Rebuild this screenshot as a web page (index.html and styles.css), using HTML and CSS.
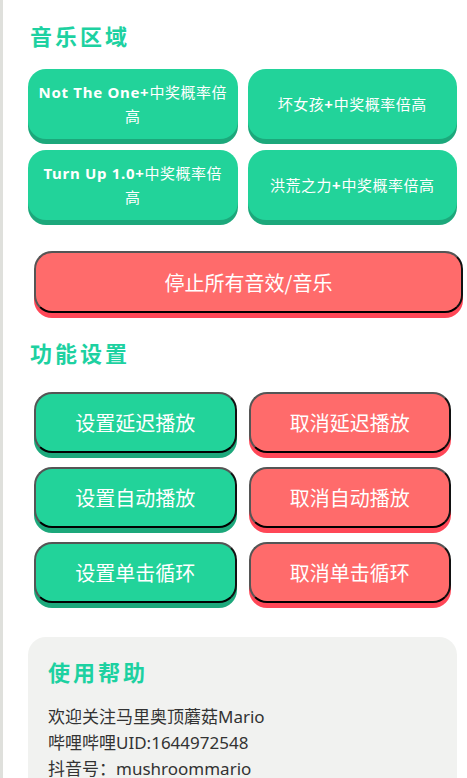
FILE: index.html
```html
<!DOCTYPE html>
<html lang="zh-CN">
<head>
<meta charset="utf-8">
<title>音乐区域</title>
<link rel="stylesheet" href="styles.css">
</head>
<body>
<div class="page">
  <section class="music">
    <h2 class="title">音乐区域</h2>
    <div class="music-grid">
      <button class="music-btn"><span class="latin">Not The One+</span>中奖概率倍高</button>
      <button class="music-btn">坏女孩<span class="latin">+</span>中奖概率倍高</button>
      <button class="music-btn"><span class="latin">Turn Up 1.0+</span>中奖概率倍高</button>
      <button class="music-btn">洪荒之力<span class="latin">+</span>中奖概率倍高</button>
    </div>
    <div class="stop-wrap">
      <button class="action-btn red stop-btn">停止所有音效/音乐</button>
    </div>
  </section>

  <section class="settings">
    <h2 class="title">功能设置</h2>
    <div class="action-grid">
      <button class="action-btn green">设置延迟播放</button>
      <button class="action-btn red">取消延迟播放</button>
      <button class="action-btn green">设置自动播放</button>
      <button class="action-btn red">取消自动播放</button>
      <button class="action-btn green">设置单击循环</button>
      <button class="action-btn red">取消单击循环</button>
    </div>
  </section>

  <section class="help">
    <h2 class="title help-title">使用帮助</h2>
    <p class="help-line">欢迎关注马里奥顶蘑菇Mario</p>
    <p class="help-line">哔哩哔哩UID:1644972548</p>
    <p class="help-line">抖音号：mushroommario</p>
  </section>
</div>
</body>
</html>
```

FILE: styles.css
```css
html {
  background: #ffffff;
}

body {
  margin: 0;
  min-height: 100vh;
  border-left: 3px solid #dfe0dc;
  font-family: "Noto Sans", "Noto Sans CJK SC", sans-serif;
  color: #333333;
  overflow: hidden;
}

.page {
  width: 429px;
  padding-left: 25px;
}

.title {
  margin: 20px 0 19px 2px;
  font-size: 22px;
  line-height: 30px;
  font-weight: 700;
  letter-spacing: 3px;
  color: #1dd1a1;
  font-family: "Noto Sans CJK SC", sans-serif;
}

.music-grid {
  display: grid;
  grid-template-columns: 1fr 1fr;
  column-gap: 10px;
  row-gap: 11px;
}

.music-btn {
  height: 70px;
  padding: 0 10px;
  border: none;
  border-radius: 18px;
  background: #22d39a;
  box-shadow: 0 5px 0 #1ca87b;
  color: #ffffff;
  font-family: "Noto Sans", "Noto Sans CJK SC", sans-serif;
  font-size: 15px;
  line-height: 24px;
  letter-spacing: 0.5px;
  font-weight: 400;
  text-align: center;
}

.latin {
  font-weight: 700;
  letter-spacing: 0.7px;
}

.stop-wrap {
  padding-top: 25px;
}

.action-btn {
  display: block;
  margin: 6px;
  height: 61px;
  border: 2px solid #555555;
  border-right-color: #111111;
  border-bottom-color: #000000;
  border-radius: 18px;
  color: #ffffff;
  font-family: "Noto Sans CJK SC", sans-serif;
  font-size: 20px;
  text-align: center;
}

.stop-btn {
  width: 100%;
  height: 62px;
}

.green {
  background: #22d39a;
  box-shadow: 0 5px 0 #1ca87b;
}

.red {
  background: #ff6b6b;
  box-shadow: 0 5px 0 #ff4757;
}

.settings .title {
  margin-top: 24px;
  margin-bottom: 19px;
}

.action-grid {
  display: grid;
  grid-template-columns: 1fr 1fr;
  row-gap: 2px;
}

.help {
  margin-top: 28px;
  padding: 19px 20px 20px;
  border-radius: 18px;
  background: #f1f2f0;
}

.help .help-title {
  margin: 0 0 18px 0;
}

.help-line {
  margin: 0;
  font-size: 17px;
  line-height: 26px;
  color: #333333;
}
```
